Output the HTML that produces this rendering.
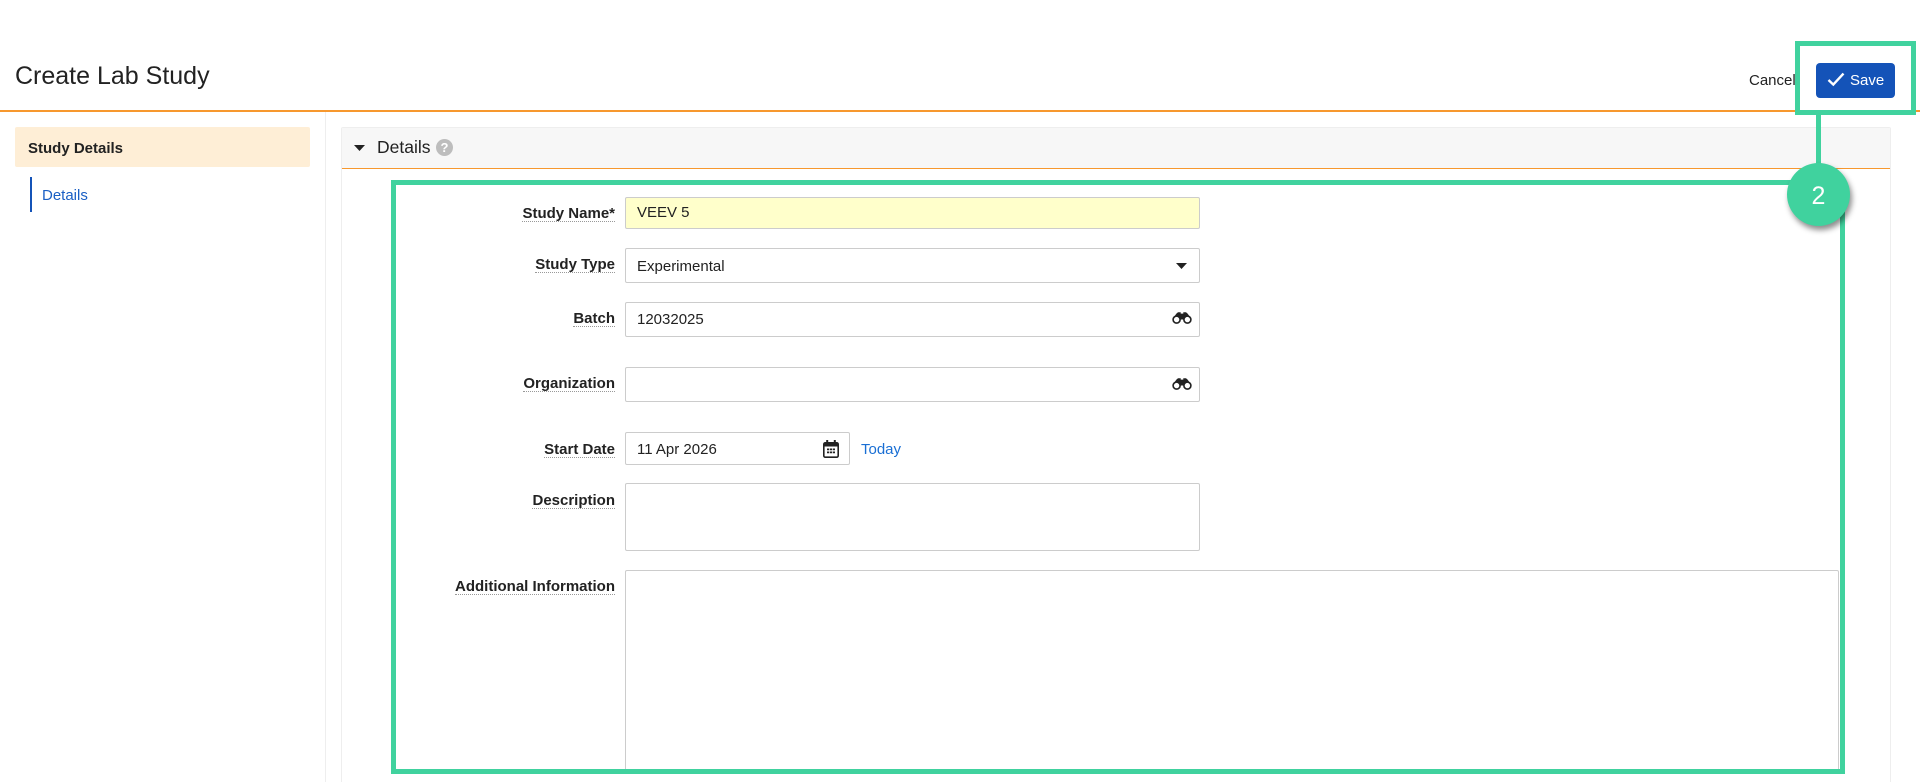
<!DOCTYPE html>
<html lang="en">
<head>
<meta charset="utf-8">
<title>Create Lab Study</title>
<style>
html,body{margin:0;padding:0;background:#fff;width:1920px;height:782px;overflow:hidden;}
#w{position:relative;width:1920px;height:782px;overflow:hidden;font-family:"Liberation Sans",Arial,sans-serif;font-size:15px;color:#222;}
.a{position:absolute;box-sizing:border-box;}
.t{position:absolute;line-height:20px;white-space:nowrap;}
.lbl{position:absolute;right:1305px;height:19px;line-height:23px;font-weight:bold;white-space:nowrap;border-bottom:1px dotted #999;color:#222;}
.inp{position:absolute;box-sizing:border-box;left:625px;width:575px;border:1px solid #ccc;border-radius:2px;background:#fff;}
</style>
</head>
<body>
<div id="w">
<div class="t" style="left:15px;top:61px;font-size:25px;line-height:30px;color:#222;">Create Lab Study</div>
<div class="a" style="left:0;top:110px;width:1920px;height:2px;background:#f7982e;"></div>

<div class="t" style="left:1749px;top:71px;">Cancel</div>
<div class="a" style="left:1816px;top:63px;width:79px;height:35px;background:#1453b8;border-radius:4px;"></div>
<svg class="a" style="left:1827px;top:72px;" width="18" height="15" viewBox="0 0 18 15"><path d="M1.5 8 L6.3 12.6 L16.5 1.6" fill="none" stroke="#fff" stroke-width="2.4"/></svg>
<div class="t" style="left:1850px;top:71px;color:#fff;">Save</div>

<!-- sidebar -->
<div class="a" style="left:15px;top:127px;width:295px;height:40px;background:#feeed6;border-radius:2px;"></div>
<div class="t" style="left:28px;top:139px;font-weight:bold;">Study Details</div>
<div class="a" style="left:30px;top:177px;width:2px;height:35px;background:#1453b8;"></div>
<div class="t" style="left:42px;top:186px;color:#1a5fc4;">Details</div>
<div class="a" style="left:325px;top:112px;width:1px;height:670px;background:#eee;"></div>

<!-- panel -->
<div class="a" style="left:341px;top:127px;width:1550px;height:655px;border:1px solid #eee;border-bottom:0;border-radius:2px 2px 0 0;"></div>
<div class="a" style="left:342px;top:128px;width:1548px;height:40px;background:#f7f7f7;"></div>
<div class="a" style="left:342px;top:168px;width:1548px;height:1px;background:#f7982e;"></div>
<svg class="a" style="left:354px;top:145px;" width="11" height="6" viewBox="0 0 11 6"><path d="M0 0H11L5.5 6Z" fill="#222"/></svg>
<div class="t" style="left:377px;top:137px;font-size:17.5px;">Details</div>
<div class="a" style="left:436px;top:139px;width:17px;height:17px;border-radius:50%;background:#bdbdbd;color:#fff;font-weight:bold;font-size:13px;line-height:17px;text-align:center;">?</div>

<!-- labels -->
<div class="lbl" style="top:202px;">Study Name*</div>
<div class="lbl" style="top:253px;">Study Type</div>
<div class="lbl" style="top:307px;">Batch</div>
<div class="lbl" style="top:372px;">Organization</div>
<div class="lbl" style="top:438px;">Start Date</div>
<div class="lbl" style="top:489px;">Description</div>
<div class="lbl" style="top:575px;">Additional Information</div>

<!-- inputs -->
<div class="inp" style="top:197px;height:32px;background:#ffffcb;"></div>
<div class="t" style="left:637px;top:203px;">VEEV 5</div>

<div class="inp" style="top:248px;height:35px;"></div>
<div class="t" style="left:637px;top:257px;">Experimental</div>
<svg class="a" style="left:1176px;top:263px;" width="11" height="6" viewBox="0 0 11 6"><path d="M0 0H11L5.5 6Z" fill="#222"/></svg>

<div class="inp" style="top:302px;height:35px;"></div>
<div class="t" style="left:637px;top:310px;">12032025</div>
<svg class="a" style="left:1172px;top:312px;" width="20" height="12" viewBox="0 0 20 12"><circle cx="4.6" cy="7.6" r="3.5" fill="none" stroke="#222" stroke-width="1.6"/><circle cx="15.4" cy="7.6" r="3.5" fill="none" stroke="#222" stroke-width="1.6"/><path d="M1.5 5.5 L4.5 1.5 L6 0.3 H8.7 V1.6 H11.3 V0.3 H14 L15.5 1.5 L18.5 5.5 L15 3.8 L12.2 5.2 V7.5 H7.8 V5.2 L5 3.8Z" fill="#222"/></svg>

<div class="inp" style="top:367px;height:35px;"></div>
<svg class="a" style="left:1172px;top:378px;" width="20" height="12" viewBox="0 0 20 12"><circle cx="4.6" cy="7.6" r="3.5" fill="none" stroke="#222" stroke-width="1.6"/><circle cx="15.4" cy="7.6" r="3.5" fill="none" stroke="#222" stroke-width="1.6"/><path d="M1.5 5.5 L4.5 1.5 L6 0.3 H8.7 V1.6 H11.3 V0.3 H14 L15.5 1.5 L18.5 5.5 L15 3.8 L12.2 5.2 V7.5 H7.8 V5.2 L5 3.8Z" fill="#222"/></svg>

<div class="inp" style="top:432px;height:33px;width:225px;"></div>
<div class="t" style="left:637px;top:440px;">11 Apr 2026</div>
<svg class="a" style="left:823px;top:440px;" width="16" height="18" viewBox="0 0 16 18"><rect x="0.8" y="2.8" width="14.4" height="14.4" rx="1.5" fill="none" stroke="#222" stroke-width="1.6"/><rect x="1" y="3" width="14" height="3.5" fill="#222"/><rect x="3.2" y="0" width="2" height="4" fill="#222"/><rect x="10.8" y="0" width="2" height="4" fill="#222"/><path d="M4 8.5h2.2v1.8H4zM6.9 8.5h2.2v1.8H6.9zM9.8 8.5h2.2v1.8H9.8zM4 11.5h2.2v1.8H4zM6.9 11.5h2.2v1.8H6.9zM9.8 11.5h2.2v1.8H9.8z" fill="#222"/></svg>
<div class="t" style="left:861px;top:440px;color:#1a6fd4;">Today</div>

<div class="inp" style="top:483px;height:68px;"></div>
<div class="inp" style="top:570px;height:202px;width:1214px;"></div>

<!-- annotation -->
<div class="a" style="left:391px;top:180px;width:1454px;height:594px;border:5px solid #40d29e;"></div>
<div class="a" style="left:1795px;top:41px;width:121px;height:74px;border:5px solid #40d29e;"></div>
<div class="a" style="left:1816px;top:115px;width:5px;height:50px;background:#40d29e;"></div>
<div class="a" style="left:1787px;top:163px;width:63px;height:63px;border-radius:50%;background:#40d29e;box-shadow:2px 4px 6px rgba(0,0,0,.45);color:#fff;font-size:25px;line-height:66px;text-align:center;">2</div>
</div>
</body>
</html>
